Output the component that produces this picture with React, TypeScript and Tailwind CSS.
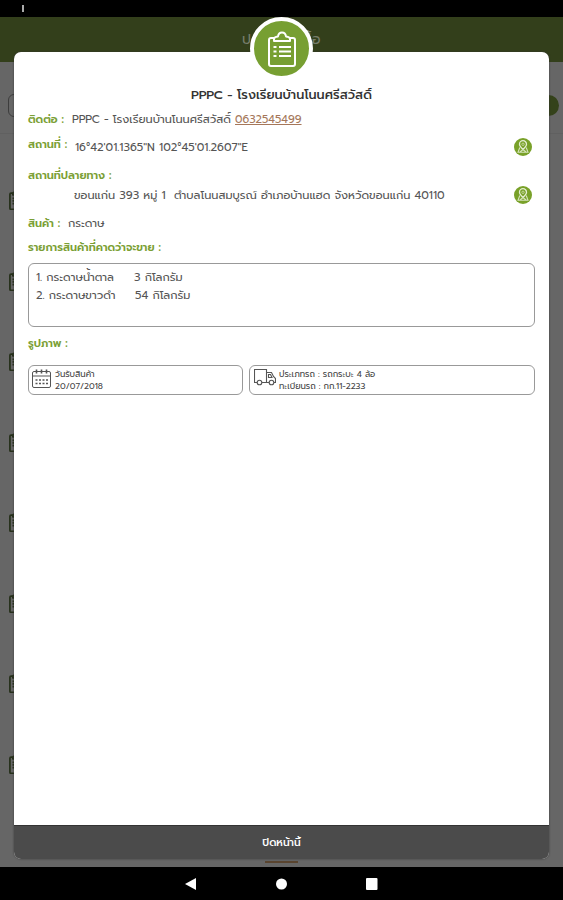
import React from 'react';

const orders = [1, 2, 3, 4, 5, 6, 7, 8];

const items = [
  { name: '1. กระดาษน้ำตาล', amount: '3 กิโลกรัม', nameClass: 'w-[98px]' },
  { name: '2. กระดาษขาวดำ', amount: '54 กิโลกรัม', nameClass: 'w-[99px]' },
];

const ClipboardIcon: React.FC<{ className?: string }> = ({ className }) => (
  <svg className={className} viewBox="0 0 28 36" fill="none" stroke="currentColor" strokeWidth="2" strokeLinejoin="round">
    <path d="M6 7H3Q1 7 1 9V33Q1 35 3 35H25Q27 35 27 33V9Q27 7 25 7H22" />
    <path d="M6 10V8Q6 6 10 5.500Q10.500 1.500 14 1.500Q17.500 1.500 18 5.500Q22 6 22 8V10Z" />
    <path d="M5.500 16h3M11 16h12M5.500 20.500h3M11 20.500h12M5.500 25h3M11 25h12" />
  </svg>
);

const PinIcon: React.FC = () => (
  <svg className="size-[18px] shrink-0" viewBox="0 0 18 18" fill="none">
    <circle cx="9" cy="9" r="9" fill="#79a129" />
    <path d="M9 11.500C7 9.500 5.500 8 5.500 6.200A3.500 3.500 0 0 1 12.500 6.200C12.500 8 11 9.500 9 11.500Z" stroke="#e4eed2" strokeWidth="1.300" />
    <circle cx="9" cy="6.300" r="1.200" stroke="#cfdfb0" strokeWidth=".8" />
    <path d="M5.800 9.500L4 14.300H14L12.200 9.500M6 14L9 11.500L12 14" stroke="#d5e3ba" strokeWidth="1.100" />
  </svg>
);

const CalendarIcon: React.FC = () => (
  <svg className="h-[19px] w-[19px] shrink-0" viewBox="0 0 19 19" fill="none" stroke="#555" strokeWidth="1">
    <rect x="0.500" y="2.500" width="18" height="16" rx="1.500" />
    <path d="M.5 7h18" />
    <path d="M4.500 .5v4M9.500 .5v4M14.500 .5v4" strokeWidth="1.600" />
    <path d="M3.500 11h2M7 11h2M10.500 11h2M14 11h2M3.500 14.500h2M7 14.500h2M10.500 14.500h2M14 14.500h2" strokeWidth="1.300" />
  </svg>
);

const TruckIcon: React.FC = () => (
  <svg className="h-[17px] w-[22px] shrink-0" viewBox="0 0 22 17" fill="none" stroke="#555" strokeWidth="1.100">
    <path d="M3 13.500H.5V.5H12.500V13.500H8M12.500 3.500H17.500L19.500 7.500L21.500 9.500V13.500H20M12.500 13.500H15M14.500 5.500H16.500L18 8.500H14.500Z" />
    <circle cx="5.500" cy="13.500" r="2.300" />
    <circle cx="17.500" cy="13.500" r="2.300" />
  </svg>
);

const Label: React.FC<{ children: React.ReactNode; className?: string }> = ({ children, className = '' }) => (
  <span className={`shrink-0 text-[11px] font-semibold whitespace-nowrap text-[#7b9f35] ${className}`}>{children}</span>
);

const Background: React.FC = () => (
  <div className="flex h-[900px] flex-col bg-[#666]">
    <div className="flex h-[17px] shrink-0 items-center bg-black pl-[22px]">
      <div className="h-[7px] w-[2px] bg-[#aaa]" />
    </div>
    <div className="flex h-[45px] shrink-0 items-center justify-center bg-[#333f1b] text-[14px] text-[#777d6b]">
      <span className="w-[79px] tracking-[0.9px] whitespace-nowrap">ประวัติรับซื้อ</span>
    </div>
    <div className="flex h-[72px] shrink-0 items-center justify-between border-b border-[#606060] pt-[15px] pr-[4px] pl-[8px]">
      <div className="h-[23px] w-[430px] rounded-md border border-[#3d3d3d]" />
      <div className="size-[21px] rounded-full bg-[#34421a]" />
    </div>
    <div className="flex min-h-0 flex-1 flex-col pt-[25px]">
      {orders.map((id) => (
        <div key={id} className="h-[80.5px] shrink-0 pt-[30px] pl-[9px]">
          <ClipboardIcon className="h-[21px] w-[17px] stroke-[3px] text-[#26301a]" />
        </div>
      ))}
    </div>
    <div className="flex h-[33px] shrink-0 items-center justify-center bg-black">
      <svg className="h-[14px] w-[193px]" viewBox="0 0 193 14" fill="#fff">
        <path d="M0 7L11 1V13Z" />
        <circle cx="96.500" cy="7" r="5.500" />
        <rect x="181" y="1" width="11.500" height="12" rx="1" />
      </svg>
    </div>
  </div>
);

const App: React.FC = () => {
  return (
    <div className="relative h-[900px] w-[563px] overflow-hidden font-['Prompt','Noto_Sans_Thai',Lato,sans-serif] text-[11.3px] leading-[20px] text-[#555]">
      <Background />
      <div className="absolute top-[861px] left-[265px] h-[2px] w-[33px] bg-[#59442f]" />

      <div className="absolute top-[52px] left-[14px] flex h-[807px] w-[535px] flex-col overflow-hidden rounded-[7px] bg-white shadow-[0_0_2px_#333]">
        <div className="flex flex-1 flex-col px-[14px] pt-[32px]">
          <h1 className="h-[26px] text-center text-[12.7px] leading-[21px] font-medium text-[#333]">
            PPPC - โรงเรียนบ้านโนนศรีสวัสดิ์
          </h1>
          <div className="flex h-[25px] whitespace-nowrap">
            <Label className="w-[44px]">ติดต่อ :</Label>
            <span className="w-[163px]">PPPC - โรงเรียนบ้านโนนศรีสวัสดิ์</span>
            <a className="text-[11.1px] text-[#a5775a] underline">0632545499</a>
          </div>
          <div className="flex h-[31px]">
            <Label className="w-[47px]">สถานที่ :</Label>
            <span className="flex-1 pt-[3px]">16°42'01.1365"N 102°45'01.2607"E</span>
            <div className="pt-[3px] pr-[3px]"><PinIcon /></div>
          </div>
          <Label className="h-[20px]">สถานที่ปลายทาง :</Label>
          <div className="flex h-[28px] pr-[3px] pl-[46px]">
            <span className="flex-1 whitespace-pre">ขอนแก่น 393 หมู่ 1  ตำบลโนนสมบูรณ์ อำเภอบ้านแฮด จังหวัดขอนแก่น 40110</span>
            <PinIcon />
          </div>
          <div className="flex h-[24px]">
            <Label className="w-[40px]">สินค้า :</Label>
            <span>กระดาษ</span>
          </div>
          <Label className="h-[25px]">รายการสินค้าที่คาดว่าจะขาย :</Label>
          <div className="h-[64px] rounded-[6px] border border-[#999] px-[7px] pt-[5px] leading-[18px]">
            {items.map((item) => (
              <div key={item.name} className="flex whitespace-nowrap">
                <span className={item.nameClass}>{item.name}</span>
                <span>{item.amount}</span>
              </div>
            ))}
          </div>
          <Label className="mt-[7px] h-[31px]">รูปภาพ :</Label>
          <div className="flex gap-[6px] text-[8.5px] leading-[12px] text-[#444]">
            <div className="flex h-[30px] w-[215px] gap-[4px] rounded-[6px] border border-[#999] px-[3px] pt-[3px]">
              <CalendarIcon />
              <div>
                <p>วันรับสินค้า</p>
                <p>20/07/2018</p>
              </div>
            </div>
            <div className="flex h-[30px] flex-1 gap-[3px] rounded-[6px] border border-[#999] px-[4px] pt-[3px]">
              <TruckIcon />
              <div>
                <p>ประเภทรถ : รถกระบะ 4 ล้อ</p>
                <p>ทะเบียนรถ : กก.11-2233</p>
              </div>
            </div>
          </div>
        </div>
        <button className="h-[34px] shrink-0 border-t border-[#333] bg-[#4b4b4b] text-[10.5px] font-medium text-white">
          ปิดหน้านี้
        </button>
      </div>

      <div className="absolute top-[17px] left-[250px] flex size-[63px] items-center justify-center rounded-full border-[4px] border-white bg-[#779f32] text-white">
        <ClipboardIcon className="h-[36px] w-[28px]" />
      </div>
    </div>
  );
};

export default App;
